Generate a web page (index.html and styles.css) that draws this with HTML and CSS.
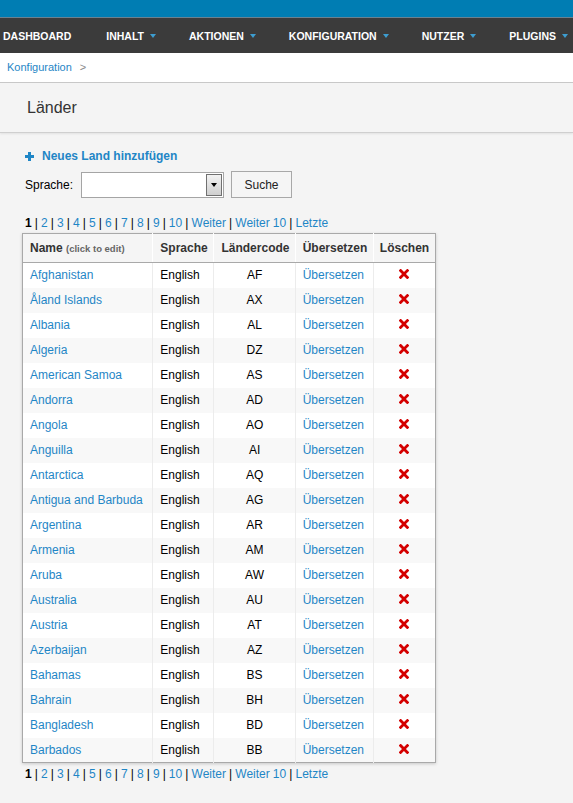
FILE: index.html
```html
<!DOCTYPE html>
<html lang="de">
<head>
<meta charset="utf-8">
<title>Länder</title>
<link rel="stylesheet" href="styles.css">
</head>
<body>
<div class="topbar"></div>
<nav class="nav">
  <a class="nav-item first" href="#">DASHBOARD</a>
  <a class="nav-item" href="#">INHALT<span class="caret"></span></a>
  <a class="nav-item" href="#">AKTIONEN<span class="caret"></span></a>
  <a class="nav-item" href="#">KONFIGURATION<span class="caret"></span></a>
  <a class="nav-item" href="#">NUTZER<span class="caret"></span></a>
  <a class="nav-item" href="#">PLUGINS<span class="caret"></span></a>
</nav>
<div class="breadcrumb"><a href="#">Konfiguration</a><span class="sep">&gt;</span></div>
<div class="titlebar"><h1>Länder</h1></div>
<div class="content">
  <a class="add-link" href="#"><svg class="plus" width="9" height="9" viewBox="0 0 9 9"><rect x="3" y="0" width="3" height="9" fill="#1f86c6"/><rect x="0" y="3" width="9" height="3" fill="#1f86c6"/></svg>Neues Land hinzufügen</a>
  <div class="filter">
    <label class="label">Sprache:</label>
    <div class="select"><span class="select-btn"><span class="select-arrow"></span></span></div>
    <button class="btn">Suche</button>
  </div>
  <div class="pager" id="pager-top"></div>
  <table class="grid">
    <colgroup>
      <col class="c1"><col class="c2"><col class="c3"><col class="c4"><col class="c5">
    </colgroup>
    <thead>
      <tr>
        <th>Name <span class="hint">(click to edit)</span></th>
        <th>Sprache</th>
        <th>Ländercode</th>
        <th>Übersetzen</th>
        <th class="center">Löschen</th>
      </tr>
    </thead>
    <tbody id="rows"></tbody>
  </table>
  <div class="pager" id="pager-bottom"></div>
</div>
<script src="app.js"></script>
</body>
</html>
```
FILE: styles.css
```css
html, body { margin: 0; padding: 0; }
body {
  background: #f4f4f4;
  font-family: "Liberation Sans", Arial, sans-serif;
  font-size: 12px;
  color: #000;
}
a { color: #1f86c6; text-decoration: none; }

.topbar { height: 17px; background: #007db3; border-bottom: 1px solid #6a8190; }
.nav {
  height: 35px;
  background: #3b3b3b;
  display: flex;
  align-items: center;
  gap: 33px;
  padding-left: 3px;
  white-space: nowrap;
  overflow: hidden;
}
.nav-item {
  color: #fff;
  font-weight: bold;
  font-size: 10.5px;
  display: flex;
  align-items: center;
}
.nav-item.first { margin-right: 2px; }
.caret {
  display: inline-block;
  width: 0; height: 0;
  margin-left: 6px;
  border-left: 3.5px solid transparent;
  border-right: 3.5px solid transparent;
  border-top: 4px solid #3d9dd0;
}

.breadcrumb {
  height: 29px;
  line-height: 29px;
  background: #fff;
  border-bottom: 1px solid #c9c9c9;
  padding-left: 7px;
  font-size: 11px;
}
.breadcrumb .sep { color: #888; margin-left: 8px; }

.titlebar {
  height: 49px;
  background: #f4f4f4;
  border-bottom: 1px solid #cfcfcf;
  box-shadow: 0 1px 2px rgba(0,0,0,0.08);
  padding-left: 27px;
}
.titlebar h1 {
  margin: 0;
  font-weight: normal;
  font-size: 16px;
  line-height: 49px;
  color: #333;
}

.content { padding: 15px 0 30px 25px; }
.add-link {
  display: flex;
  align-items: center;
  height: 16px;
  font-weight: bold;
  font-size: 12px;
}
.plus { margin-right: 8px; }

.filter {
  display: flex;
  align-items: center;
  margin-top: 7px;
  height: 27px;
}
.label { width: 56px; }
.select {
  width: 139px;
  height: 22px;
  background: #fff;
  border: 1px solid #a5a5a5;
  display: flex;
  justify-content: flex-end;
  align-items: stretch;
  padding: 1px;
}
.select-btn {
  width: 14px;
  border: 1px solid #707070;
  background: linear-gradient(#f2f2f2, #cfcfcf);
  display: flex;
  align-items: center;
  justify-content: center;
}
.select-arrow {
  width: 0; height: 0;
  border-left: 3.5px solid transparent;
  border-right: 3.5px solid transparent;
  border-top: 4px solid #000;
}
.btn {
  margin-left: 7px;
  width: 61px;
  height: 27px;
  background: #f5f5f5;
  border: 1px solid #a8a8a8;
  font-family: "Liberation Sans", Arial, sans-serif;
  font-size: 12px;
  color: #222;
  padding: 0;
}

.pager {
  height: 16px;
  line-height: 16px;
  font-size: 12px;
  color: #000;
  word-spacing: -0.25px;
}
#pager-top { margin-top: 17px; }
#pager-bottom { margin-top: 3px; }
.pager .cur { font-weight: bold; }

.grid {
  margin-top: 2px;
  margin-left: -3px;
  border-collapse: collapse;
  border: 1px solid #a9a9a9;
  box-shadow: 0 1px 3px rgba(0,0,0,0.18);
  table-layout: fixed;
  width: 414px;
}
.c1 { width: 130px; }
.c2 { width: 61px; }
.c3 { width: 81px; }
.c4 { width: 78px; }
.c5 { width: 62px; }
.grid th {
  height: 28px;
  padding: 0 0 0 7px;
  text-align: left;
  font-weight: bold;
  color: #333;
  background: #f5f5f5;
  border-bottom: 1px solid #a9a9a9;
  border-left: 1px solid #fff;
  white-space: nowrap;
}
.grid th:first-child { border-left: 0; }
.grid th.center { text-align: left; padding-left: 6px; }
.hint { font-size: 9.5px; color: #666; }
.grid td {
  height: 25px;
  padding: 0 0 0 7px;
  border-left: 1px solid #ececec;
  white-space: nowrap;
  box-sizing: border-box;
}
.grid td:first-child { border-left: 0; }
.grid tbody tr:nth-child(even) td { background: #f8f8f8; }
.grid tbody tr:nth-child(odd) td { background: #fff; }
.grid td.code { text-align: center; padding-left: 0; }
.grid td.del { text-align: center; padding-left: 0; }
.x { display: inline-block; vertical-align: 0; }
```
FILE: app.js
```js
var countries = [
  ["Afghanistan","AF"],["Åland Islands","AX"],["Albania","AL"],["Algeria","DZ"],
  ["American Samoa","AS"],["Andorra","AD"],["Angola","AO"],["Anguilla","AI"],
  ["Antarctica","AQ"],["Antigua and Barbuda","AG"],["Argentina","AR"],["Armenia","AM"],
  ["Aruba","AW"],["Australia","AU"],["Austria","AT"],["Azerbaijan","AZ"],
  ["Bahamas","BS"],["Bahrain","BH"],["Bangladesh","BD"],["Barbados","BB"]
];
var x = '<svg class="x" width="10" height="10" viewBox="0 0 10 10"><path d="M1.6 1.6L8.4 8.4M8.4 1.6L1.6 8.4" stroke="#d40000" stroke-width="2.8" stroke-linecap="square"/></svg>';
var html = "";
countries.forEach(function (c) {
  html += '<tr><td><a href="#">' + c[0] + '</a></td><td>English</td><td class="code">' + c[1] +
    '</td><td><a href="#">Übersetzen</a></td><td class="del">' + x + '</td></tr>';
});
document.getElementById("rows").innerHTML = html;
var p = '<span class="cur">1</span>';
for (var i = 2; i <= 10; i++) p += ' | <a href="#">' + i + '</a>';
p += ' | <a href="#">Weiter</a> | <a href="#">Weiter 10</a> | <a href="#">Letzte</a>';
document.getElementById("pager-top").innerHTML = p;
document.getElementById("pager-bottom").innerHTML = p;
```
